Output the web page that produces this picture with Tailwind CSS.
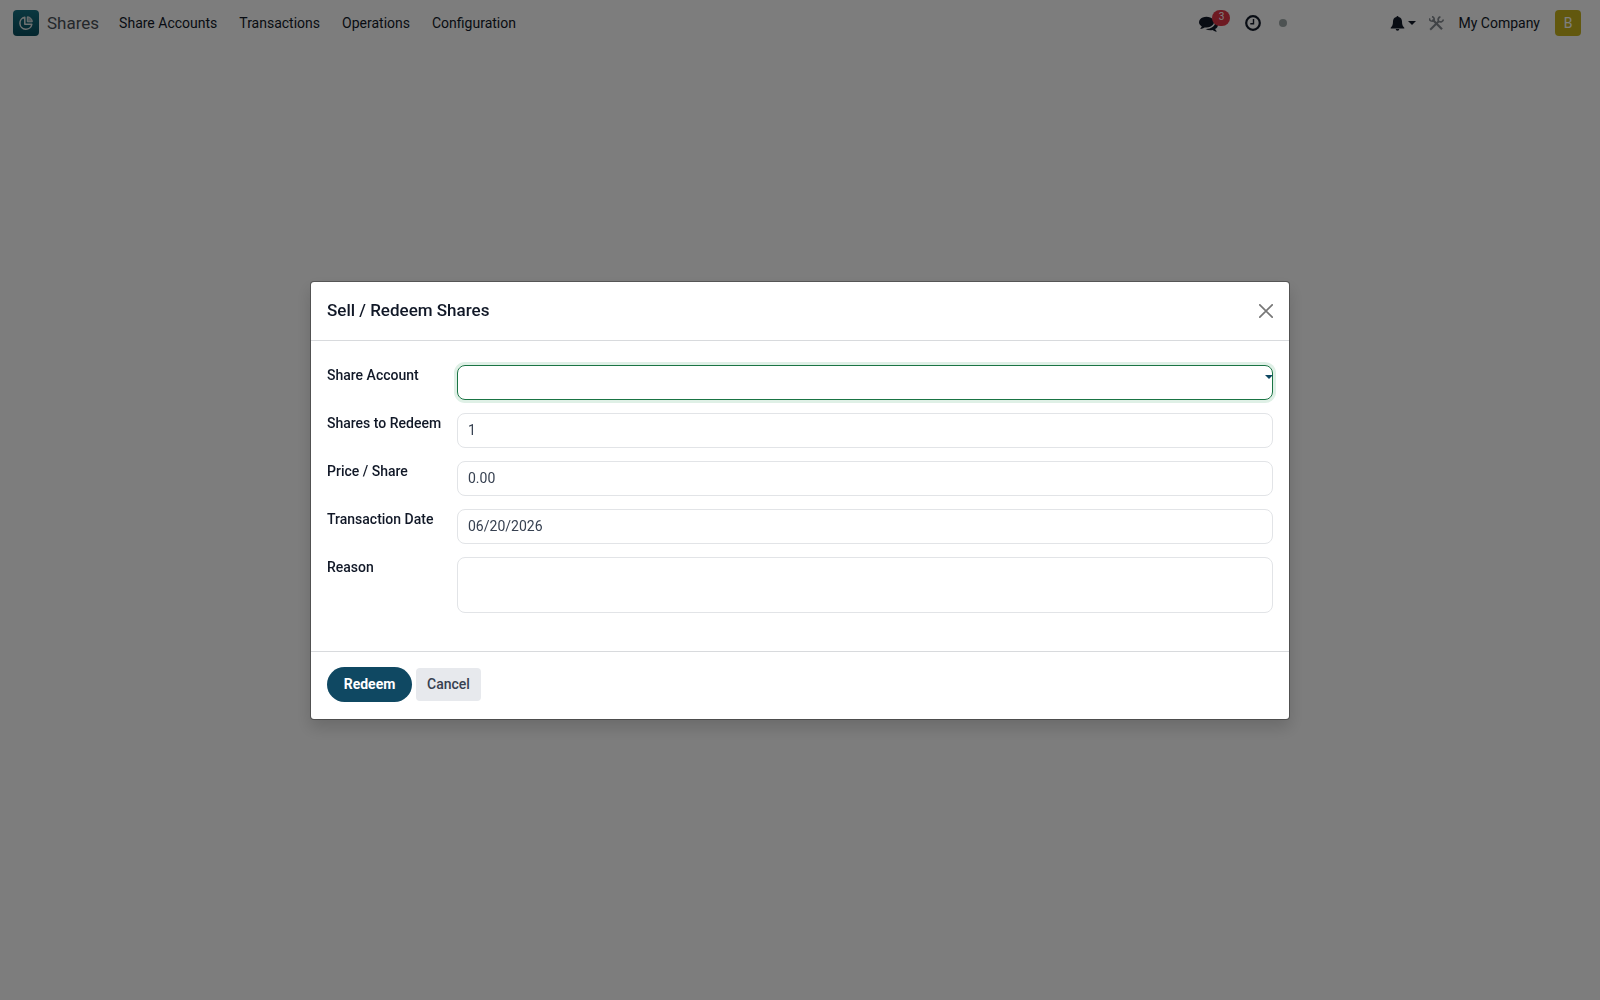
<!DOCTYPE html>
<html lang="en">
<head>
<meta charset="utf-8">
<title>Shares</title>
<script src="https://cdn.jsdelivr.net/npm/@tailwindcss/browser@4"></script>
</head>
<body class="min-h-screen bg-[#fafafa] font-[Roboto,sans-serif] text-sm text-[#111827]">
<header class="flex h-[46px] items-center bg-[#fafafa] pl-[13px] pr-[19px]">
  <a href="#" class="flex items-center gap-2 text-[17px] text-[#495057]">
    <svg class="size-[26px]" viewBox="0 0 26 26" fill="none"><defs><linearGradient id="g" x1="0" y1="0" x2="0" y2="1"><stop stop-color="#156f80"/><stop offset="1" stop-color="#084c5c"/></linearGradient></defs><rect width="26" height="26" rx="4" fill="url(#g)"/><path d="M11.800 7.300A6 6 0 1 0 18.800 14.300H11.800z" stroke="#e0e4e4" stroke-width="1.500" stroke-linejoin="round"/><path d="M14.300 6.800v5h5a5 5 0 0 0-5-5z" fill="#9db5ba" stroke="#e0e4e4" stroke-width="1" stroke-linejoin="round"/></svg>
    <span>Shares</span>
  </a>
  <nav class="ml-5 flex gap-[22px]">
    <a href="#">Share Accounts</a>
    <a href="#">Transactions</a>
    <a href="#">Operations</a>
    <a href="#">Configuration</a>
  </nav>
  <div class="ml-auto flex items-center">
    <button aria-label="Messages" class="relative mr-[27px]">
      <svg class="size-[19px]" viewBox="0 0 1792 1792" fill="#111827"><path d="M1408 768q0 139-94 257t-256.500 186.500-353.500 68.500q-86 0-176-16-124 88-278 128-36 9-86 16h-3q-11 0-20.500-8t-11.500-21q-1-3-1-6.500t.5-6.500 2-6l2.500-5 3.500-5.500 4-5 4.500-5 4-4.500q5-6 23-25t26-29.500 22.500-29 25-38.500 20.500-44q-124-72-195-177t-71-224q0-139 94-257t256.500-186.500 353.500-68.500 353.500 68.500 256.500 186.500 94 257zm384 256q0 120-71 224.500t-195 176.500q10 24 20.500 44t25 38.500 22.500 29 26 29.500 23 25q1 1 4 4.500t4.500 5 4 5 3.500 5.500l2.500 5 2 6 .5 6.500-1 6.500q-3 14-13 22t-22 7q-50-7-86-16-154-40-278-128-90 16-176 16-271 0-472-132 58 4 88 4 161 0 309-45t264-129q125-92 192-212t67-254q0-77-23-152 129 71 204 178t75 230z"/></svg>
      <span class="absolute -top-[4px] left-[13px] flex h-4 w-[18px] items-center justify-center rounded-full bg-[#dc3545] text-[10px] text-white">3</span>
    </button>
    <button aria-label="Activities" class="mr-[18px]"><svg class="size-[16px]" viewBox="0 0 16 16" fill="none" stroke="#111827"><circle cx="8" cy="8" r="6.800" stroke-width="2.200"/><path d="M8.500 4v4.700H5.300" stroke-width="1.400"/></svg></button>
    <span class="mr-[103px] size-2 rounded-full bg-[#9ba5a5]"></span>
    <button aria-label="Notifications" class="mr-[13px] flex items-center gap-[3px]">
      <svg class="size-[15px]" viewBox="0 0 15 15" fill="#111827"><path d="M7.500 0a1 1 0 0 1 1 1.100C10.800 1.600 12 3.400 12 5.600c0 3 .7 4.700 2.300 6.100v.8H.7v-.8C2.300 10.300 3 8.600 3 5.600c0-2.200 1.200-4 3.500-4.500a1 1 0 0 1 1-1.100zM5.700 13h3.600a1.800 1.800 0 0 1-3.600 0z"/></svg>
      <svg class="h-1 w-2" viewBox="0 0 8 4" fill="#111827"><path d="M0 0h8L4 4z"/></svg>
    </button>
    <button aria-label="Developer tools" class="mr-[14px]"><svg class="size-[15px]" viewBox="0 0 15 15" fill="none" stroke="#80868c"><path d="M3.500 3.500l9.500 9.700" stroke-width="2.200"/><path d="M.5 2.200A2.600 2.600 0 0 0 4.800 4.500 2.600 2.600 0 0 0 3 .6" stroke-width="1.600"/><path d="M1.200 13.800L9.500 5.500" stroke-width="2"/><path d="M14.300 3.500A2.800 2.800 0 0 1 9.800 5.300 2.800 2.800 0 0 1 11.400.8" stroke-width="1.700"/></svg></button>
    <button class="mr-[15px]">My Company</button>
    <button aria-label="User menu" class="flex size-[26px] items-center justify-center rounded bg-[#c4b11c] text-white">B</button>
  </div>
</header>

<div class="fixed inset-0 flex items-center justify-center bg-black/50">
  <form role="dialog" aria-labelledby="title" class="w-full max-w-[980px] rounded-[4px] border border-black/30 bg-white bg-clip-padding shadow-[0_8px_16px_rgba(0,0,0,0.15)]">
    <div class="flex h-[59px] items-center justify-between border-b border-[#d8dadd] px-4">
      <h1 id="title" class="text-[17px] font-medium">Sell / Redeem Shares</h1>
      <button type="button" aria-label="Close"><svg class="size-[14px]" viewBox="0 0 14 14" stroke="#777" stroke-width="1.700" stroke-linecap="round"><path d="M.8.8l12.400 12.400M13.200.8L.8 13.200"/></svg></button>
    </div>
    <div class="grid grid-cols-[114px_1fr] gap-x-4 gap-y-[13px] px-4 pb-[38px] pt-6">
      <label for="account" class="whitespace-nowrap font-medium">Share Account</label>
      <div class="relative">
        <input id="account" role="combobox" class="block h-[35px] w-full rounded-lg border border-[#1a7444] px-[10px] shadow-[0_0_0_3px_#dff0e6] outline-none">
        <svg class="absolute right-0 top-[10px] h-1 w-2" viewBox="0 0 8 4" fill="#0f4862"><path d="M0 0h8L4 4z"/></svg>
      </div>
      <label for="shares" class="whitespace-nowrap font-medium">Shares to Redeem</label>
      <input id="shares" value="1" class="h-[35px] rounded-lg border border-[#e2e4e7] px-[10px] text-[#374151]">
      <label for="price" class="whitespace-nowrap font-medium">Price / Share</label>
      <input id="price" value="0.00" class="h-[35px] rounded-lg border border-[#e2e4e7] px-[10px] text-[#374151]">
      <label for="date" class="whitespace-nowrap font-medium">Transaction Date</label>
      <input id="date" value="06/20/2026" class="h-[35px] rounded-lg border border-[#e2e4e7] px-[10px] text-[#374151]">
      <label for="reason" class="whitespace-nowrap font-medium">Reason</label>
      <textarea id="reason" class="h-14 resize-none rounded-lg border border-[#e2e4e7] px-[10px] py-2 text-[#374151]"></textarea>
    </div>
    <div class="flex items-center gap-1 border-t border-[#d8dadd] px-4 pb-[17px] pt-[15px]">
      <button type="button" class="h-[35px] w-[85px] rounded-full bg-[#0f4862] font-bold text-white">Redeem</button>
      <button type="button" class="h-[33px] w-[65px] rounded-[4px] bg-[#e7e9ed] font-medium text-[#374151]">Cancel</button>
    </div>
  </form>
</div>
</body>
</html>
